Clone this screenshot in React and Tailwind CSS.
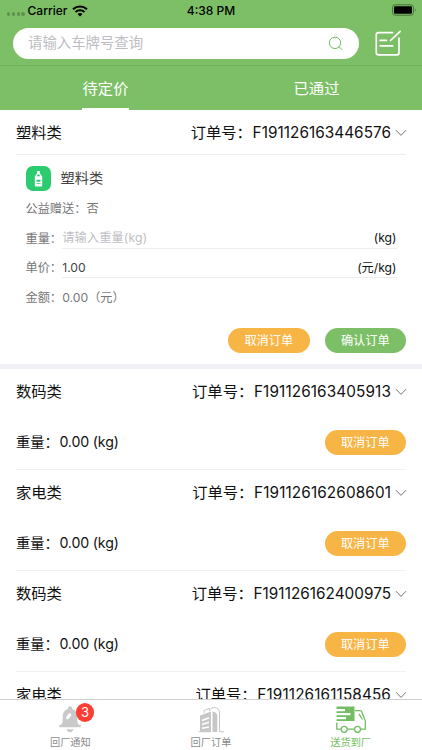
import React from 'react';

const orders = [
  { type: '数码类', id: 'F191126163405913', spacing: 'tracking-[0.12px]' },
  { type: '家电类', id: 'F191126162608601', spacing: 'tracking-[0.12px]' },
  { type: '数码类', id: 'F191126162400975', spacing: 'tracking-[0.03px]' },
];

function Chevron() {
  return (
    <svg className="ml-[4px] mr-[-1px] h-[8px] w-[12px] shrink-0" viewBox="0 0 12 8" fill="none" stroke="#666" strokeWidth="0.9">
      <path d="M1 1.2 6 6.4 11 1.2" />
    </svg>
  );
}

function OrderTitle({ type, id, spacing }) {
  return (
    <div className="flex h-[44px] shrink-0 items-center justify-between pt-[2px] text-[15.3px] text-[#111]">
      <span>{type}</span>
      <div className="flex items-center">
        <span className="mr-[0.7px]">订单号：</span>
        <span className={spacing}>{id}</span>
        <Chevron />
      </div>
    </div>
  );
}

function Pill({ children, color = 'bg-[#f6b545]' }) {
  return (
    <button className={`flex h-[25px] w-[81.5px] items-center justify-center rounded-full pt-[2px] text-[12.2px] text-white ${color}`}>
      {children}
    </button>
  );
}

function Header() {
  return (
    <header className="h-[110px] shrink-0 bg-[#7dbf66]">
      <div className="grid h-[20px] grid-cols-3 items-center px-[7px] pt-[1px] text-[12px] font-medium text-black">
        <div className="flex items-center">
          <div className="mt-[7px] flex gap-[1.6px]">
            {[0, 1, 2, 3].map((n) => <i key={n} className="size-[3.2px] rounded-full bg-[#5f924e]" />)}
          </div>
          <span className="ml-[3px]">Carrier</span>
          <svg className="ml-[5px] h-[12px] w-[16px]" viewBox="0 0 16 12" fill="none" stroke="#000" strokeWidth="2.1">
            <path d="M1 4.2a10.3 10.3 0 0 1 14 0M3.5 7a6.6 6.6 0 0 1 9 0" />
            <path d="M8 11.5 5.6 9.1a3.5 3.5 0 0 1 4.8 0Z" fill="#000" stroke="none" />
          </svg>
        </div>
        <span className="text-center">4:38 PM</span>
        <svg className="mr-[-2px] mt-[-2px] h-[12px] w-[26px] justify-self-end" viewBox="0 0 26 12">
          <rect x="1.5" y=".8" width="21" height="10.4" rx="2.8" fill="none" stroke="#477039" />
          <rect x="3" y="2.3" width="18" height="7.4" rx="1.3" />
          <path d="M24 4.2q1.6 1.8 0 3.6Z" fill="#477039" />
        </svg>
      </div>
      <div className="flex h-[46px] items-start border-b border-[#70ad5c] pl-[12.5px] pt-[8px]">
        <div className="flex h-[30.5px] w-[346px] items-center justify-between rounded-full bg-white pl-[15.5px] pr-[16px] text-[14.4px] text-[#bdbdc3]">
          <span>请输入车牌号查询</span>
          <svg className="size-[15px]" viewBox="0 0 15 15" fill="none" stroke="#75b961" strokeWidth="1">
            <circle cx="7" cy="6.8" r="5.7" />
            <path d="m11 10.7 3 3" />
          </svg>
        </div>
        <svg className="ml-[16px] mt-[1px] h-[28px] w-[28px]" viewBox="0 0 28 28" fill="none" stroke="#fff" strokeWidth="1.7" strokeLinecap="round" strokeLinejoin="round">
          <path d="M17.5 3.7H3.3Q1.3 3.7 1.3 5.7V23.8Q1.3 25.8 3.3 25.8H22Q24 25.8 24 23.8V9.2M25.2 2.4 15.5 11.5M5.2 11.4h6.2M5.2 16.8h12.5" />
        </svg>
      </div>
      <nav className="grid h-[44px] grid-cols-2 text-[15.3px] text-white">
        <div className="flex flex-col items-center">
          <span className="flex h-[42px] items-center pt-[3px]">待定价</span>
          <i className="h-[2px] w-[47px] bg-white" />
        </div>
        <div className="flex h-[42px] items-center justify-center pt-[3px]">已通过</div>
      </nav>
    </header>
  );
}

function ExpandedOrder() {
  return (
    <section className="h-[259px] shrink-0 border-b-[5px] border-[#f0f0f6] px-[16px]">
      <div className="border-b border-[#eeeff5]">
        <OrderTitle type="塑料类" id="F191126163446576" spacing="tracking-[0.05px]" />
      </div>
      <div className="px-[9.5px] pt-[10px] text-[12.2px] text-[#777]">
        <div className="flex h-[26px] items-center gap-[10px] text-[14.2px] text-[#444]">
          <svg className="size-[25px]" viewBox="0 0 25 25">
            <rect width="25" height="25" rx="7" fill="#2bcc70" />
            <path d="M11.2 5h2.6v2.2l2.4 3.2v9.2q0 1-1 1H9.8q-1 0-1-1v-9.2l2.4-3.2Z" fill="#fff" />
            <path d="M10.5 10.2 12.5 8l2 2.2ZM10.5 13.8h4v2h-4ZM10.5 17.3h4v.8h-4Z" fill="#2bcc70" />
          </svg>
          <span>塑料类</span>
        </div>
        <div className="flex h-[33px] items-center pt-[4px]">公益赠送：否</div>
        <div className="flex h-[25px]">
          <span className="flex w-[36.7px] shrink-0 items-center whitespace-nowrap pt-[5px]">重量：</span>
          <div className="flex grow items-center justify-between border-b border-[#eee] pt-[5px]">
            <span className="tracking-[0.15px] text-[#c0c0c5]">请输入重量(kg)</span>
            <span className="text-[#111]">(kg)</span>
          </div>
        </div>
        <div className="flex h-[29px]">
          <span className="flex w-[36.7px] shrink-0 items-center whitespace-nowrap pt-[10px]">单价：</span>
          <div className="flex grow items-center justify-between border-b border-[#eee] pt-[10px]">
            <span className="text-[#444]">1.00</span>
            <span className="text-[#111]">(元/kg)</span>
          </div>
        </div>
        <div className="flex h-[31px] items-center pt-[9px]">
          <span className="w-[36.7px] shrink-0 whitespace-nowrap">金额：</span>
          <span>0.00（元）</span>
        </div>
      </div>
      <div className="mt-[19px] flex justify-end gap-[15px]">
        <Pill>取消订单</Pill>
        <Pill color="bg-[#7dbf66]">确认订单</Pill>
      </div>
    </section>
  );
}

function Order(props) {
  return (
    <section className="mx-[16px] flex h-[101px] shrink-0 flex-col border-b border-[#f1f1f4]">
      <OrderTitle {...props} />
      <div className="flex grow items-center justify-between pt-[2px] text-[14.2px] text-[#111]">
        <span className="pt-px">重量：<span className="ml-[0.8px] tracking-[-0.15px]">0.00 (kg)</span></span>
        <Pill>取消订单</Pill>
      </div>
    </section>
  );
}

function BellIcon() {
  return (
    <svg className="h-[28px] w-[24px]" viewBox="0 0 24 28" fill="#c9c9c9">
      <path d="M10 3V2q0-1.7 2-1.7T14 2v1q5.3 1.5 5.3 7.5v5.2q0 2.3 2.5 3.2 1.2.5 1.2 1.4 0 1-1 1H2q-1 0-1-1 0-.9 1.2-1.4 2.5-.9 2.5-3.2v-5.2Q4.7 4.5 10 3ZM8.5 23.3h7q-1 3-3.500 3t-3.500-3Z" />
      <ellipse cx="10.6" cy="10.3" rx="1.7" ry="3.4" fill="#fff" transform="rotate(40 10.6 10.3)" />
    </svg>
  );
}

function BuildingIcon() {
  return (
    <svg className="h-[28px] w-[28px]" viewBox="0 0 28 28" fill="#c7c7c7">
      <path d="M3 9.5 14 5.5V26H3Z" />
      <path d="m5 14.5 7-2.700M5 18.500l7-2.200M5 22.300l7-1.300" stroke="#fff" strokeWidth="1.5" />
      <path d="M15.5 5.5q4.800.5 4.800 5v15.500h-4.800ZM1.500 25.200h12v1H1.500Z" />
      <path d="M7 7V4.500l5.500-2V5M13.500 3.500q1-2 4-2 5 .6 5 5.500v18.700H27" fill="none" stroke="#c7c7c7" />
    </svg>
  );
}

function TruckIcon() {
  return (
    <svg className="h-[28px] w-[32px]" viewBox="0 0 32 28" fill="none" stroke="#73bd62" strokeWidth="1.3">
      <path d="M1.5 0.5H19.5V15H1.5V13.2H11V11H1.5V9.2H15.5V7H1.5V5.2H10V3H1.5Z" fill="#73bd62" stroke="none" />
      <path d="M1.8 16.5v6.700h4.300M12.300 23.200h7.200M25.500 23.200h4.800v-8.400L27 6.200q-.6-1.500-2-1.500h-5M23.800 7.800l3.700 5.700" />
      <circle cx="9.2" cy="23.3" r="3" />
      <circle cx="22.5" cy="23.3" r="3" />
    </svg>
  );
}

function TabBar() {
  return (
    <nav className="grid h-[51px] shrink-0 grid-cols-3 border-t border-[#cfcfcf] bg-white text-[10.2px] text-[#8c8c8c]">
      <div className="flex flex-col items-center pt-[6px]">
        <div className="relative">
          <BellIcon />
          <span className="absolute left-[17.5px] top-[-3px] flex size-[18.5px] items-center justify-center rounded-full bg-[#fc3e35] text-[13px] text-white">3</span>
        </div>
        <span className="mt-[1px] leading-[15px]">回厂通知</span>
      </div>
      <div className="flex flex-col items-center pt-[6px]">
        <BuildingIcon />
        <span className="mt-[1px] leading-[15px]">回厂订单</span>
      </div>
      <div className="flex flex-col items-center pt-[6px] text-[#73bd62]">
        <div className="-ml-[2px] h-[28px]"><TruckIcon /></div>
        <span className="-ml-[2px] mt-[1px] leading-[15px]">送货到厂</span>
      </div>
    </nav>
  );
}

export default function App() {
  return (
    <div className="flex h-[750px] w-[422px] flex-col overflow-hidden bg-white font-[Inter,'Noto_Sans_CJK_SC',sans-serif] leading-none">
      <Header />
      <main className="flex min-h-0 grow flex-col overflow-hidden">
        <ExpandedOrder />
        {orders.map((order) => <Order key={order.id} {...order} />)}
        <div className="mx-[16px]">
          <OrderTitle type="家电类" id="F191126161158456" spacing="tracking-[0.13px]" />
        </div>
      </main>
      <TabBar />
    </div>
  );
}
